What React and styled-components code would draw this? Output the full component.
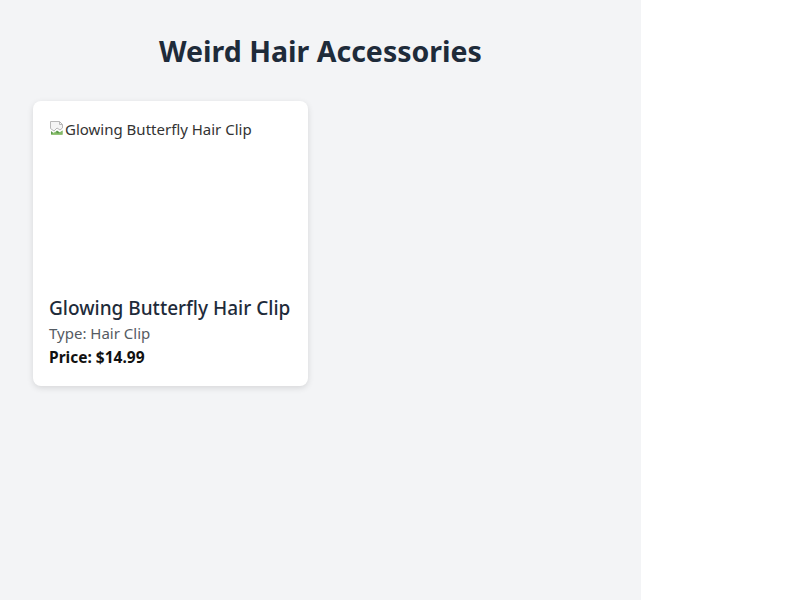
import styled, { createGlobalStyle } from "styled-components";

const GlobalStyle = createGlobalStyle`
	html, body {
		margin: 0;
		padding: 0;
		background: #ffffff;
		font-family: "Noto Sans", "Open Sans", Arial, sans-serif;
	}
`;

const products = [
	{
		id: 1,
		name: "Glowing Butterfly Hair Clip",
		type: "Hair Clip",
		price: 14.99,
	},
];

const BrokenIcon = () => (
	<svg width="16" height="16" viewBox="0 0 16 16" aria-hidden="true">
		<path d="M1.5 1.5h9l3 3v3.5l-2.5 2-3-2-3 3-3.5-2.5z" fill="#f4f4f4" stroke="#b8b8b8" />
		<path d="M10.5 1.5v3h3" fill="none" stroke="#b8b8b8" />
		<path d="M2 11l3 2.5 3-3 3 2 2.5-2v4H2z" fill="#5b9a4a" />
		<path d="M2 14.5l4-3 3 2 4.5-3v4.5H2z" fill="#8fc26f" opacity="0.8" />
	</svg>
);

const App = () => {
	return (
		<>
			<GlobalStyle />
			<Main>
				<Title>Weird Hair Accessories</Title>
				<Grid>
					{products.map((product) => (
						<Card key={product.id}>
							<ImageBox>
								<BrokenIcon />
								<span>{product.name}</span>
							</ImageBox>
							<Name>{product.name}</Name>
							<Type>Type: {product.type}</Type>
							<Price>Price: ${product.price.toFixed(2)}</Price>
						</Card>
					))}
				</Grid>
			</Main>
		</>
	);
};

const Main = styled.main`
	width: 641px;
	min-height: 600px;
	box-sizing: border-box;
	padding: 31px 33px 32px;
	background: #f3f4f6;
`;

const Title = styled.h1`
	margin: 0 0 30px;
	text-align: center;
	color: #1e2b3a;
	font-size: 28.5px;
	line-height: 40px;
	font-weight: 700;
`;

const Grid = styled.div`
	display: grid;
	grid-template-columns: repeat(2, 275px);
	gap: 24px;
`;

const Card = styled.div`
	background: #ffffff;
	border-radius: 8px;
	box-shadow: 0 2px 6px rgba(0, 0, 0, 0.12);
	padding: 16px 16px 18px;
`;

const ImageBox = styled.div`
	height: 170px;
	display: flex;
	align-items: flex-start;
	color: #333333;
	font-size: 15px;
	line-height: 24px;

	& svg {
		margin-top: 3px;
		flex-shrink: 0;
	}
`;

const Name = styled.h3`
	margin: 8px 0 0;
	color: #1e2b3a;
	font-size: 19px;
	line-height: 26px;
	font-weight: 500;
`;

const Type = styled.p`
	margin: 2px 0 0;
	color: #555b63;
	font-size: 15px;
	line-height: 20px;
`;

const Price = styled.p`
	margin: 4px 0 0;
	color: #111111;
	font-size: 15.5px;
	line-height: 21px;
	font-weight: 700;
`;

export default App;
